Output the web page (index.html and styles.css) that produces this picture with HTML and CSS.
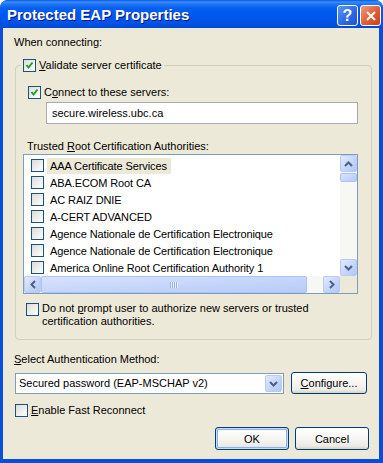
FILE: index.html
```html
<!DOCTYPE html>
<html lang="en">
<head>
    <meta charset="UTF-8">
    <meta name="viewport" content="width=device-width, initial-scale=1.0">
    <title>Protected EAP Properties</title>
    <link rel="stylesheet" href="styles.css">
</head>
<body>
    <div class="window">
        <div class="titlebar">
            <span class="title">Protected EAP Properties</span>
            <div class="caption-buttons">
                <span class="cap-btn help">?</span>
                <span class="cap-btn close">
                    <svg width="10" height="10" viewBox="0 0 10 10"><path d="M1 1 L9 9 M9 1 L1 9" stroke="#fff" stroke-width="2" fill="none"/></svg>
                </span>
            </div>
        </div>

        <div class="client">
            <div class="label first">When connecting:</div>

            <fieldset class="group">
                <legend class="check-label legend">
                    <span class="box"><svg width="11" height="11" viewBox="0 0 11 11"><path d="M2.5 5 L4.5 7.5 L8.5 2.5" stroke="#21A121" stroke-width="2" fill="none"/></svg></span>
                    <span><u>V</u>alidate server certificate</span>
                </legend>

                <div class="check-label connect">
                    <span class="box"><svg width="11" height="11" viewBox="0 0 11 11"><path d="M2.5 5 L4.5 7.5 L8.5 2.5" stroke="#21A121" stroke-width="2" fill="none"/></svg></span>
                    <span>C<u>o</u>nnect to these servers:</span>
                </div>
                <div class="textbox">secure.wireless.ubc.ca</div>

                <div class="label trusted">Trusted <u>R</u>oot Certification Authorities:</div>
                <div class="listbox">
                    <div class="list-items">
                        <div class="item"><span class="box"></span><span class="item-text selected">AAA Certificate Services</span></div>
                        <div class="item"><span class="box"></span><span class="item-text">ABA.ECOM Root CA</span></div>
                        <div class="item"><span class="box"></span><span class="item-text">AC RAIZ DNIE</span></div>
                        <div class="item"><span class="box"></span><span class="item-text">A-CERT ADVANCED</span></div>
                        <div class="item"><span class="box"></span><span class="item-text">Agence Nationale de Certification Electronique</span></div>
                        <div class="item"><span class="box"></span><span class="item-text">Agence Nationale de Certification Electronique</span></div>
                        <div class="item"><span class="box"></span><span class="item-text">America Online Root Certification Authority 1</span></div>
                    </div>
                    <div class="vscroll">
                        <span class="sb-btn"><svg width="9" height="6" viewBox="0 0 9 6"><path d="M1 5 L4.5 1.5 L8 5" fill="none" stroke="#4D6185" stroke-width="2"/></svg></span>
                        <span class="sb-thumb vthumb"></span>
                        <span class="sb-track"></span>
                        <span class="sb-btn"><svg width="9" height="6" viewBox="0 0 9 6"><path d="M1 1 L4.5 4.5 L8 1" fill="none" stroke="#4D6185" stroke-width="2"/></svg></span>
                    </div>
                    <div class="hscroll">
                        <span class="sb-btn"><svg width="6" height="9" viewBox="0 0 6 9"><path d="M5 1 L1.5 4.5 L5 8" fill="none" stroke="#4D6185" stroke-width="2"/></svg></span>
                        <span class="sb-thumb hthumb"><span class="grip"></span></span>
                        <span class="sb-track"></span>
                        <span class="sb-btn"><svg width="6" height="9" viewBox="0 0 6 9"><path d="M1 1 L4.5 4.5 L1 8" fill="none" stroke="#4D6185" stroke-width="2"/></svg></span>
                    </div>
                    <div class="corner"></div>
                </div>

                <div class="check-label prompt">
                    <span class="box"></span>
                    <span>Do not <u>p</u>rompt user to authorize new servers or trusted<br>certification authorities.</span>
                </div>
            </fieldset>

            <div class="label method"><u>S</u>elect Authentication Method:</div>
            <div class="method-row">
                <div class="combo">
                    <span class="combo-text">Secured password (EAP-MSCHAP v2)</span>
                    <span class="sb-btn combo-btn"><svg width="9" height="6" viewBox="0 0 9 6"><path d="M1 1 L4.5 4.5 L8 1" fill="none" stroke="#4D6185" stroke-width="2"/></svg></span>
                </div>
                <button class="btn configure"><u>C</u>onfigure...</button>
            </div>

            <div class="check-label fast">
                <span class="box"></span>
                <span><u>E</u>nable Fast Reconnect</span>
            </div>

            <div class="dialog-buttons">
                <button class="btn default">OK</button>
                <button class="btn">Cancel</button>
            </div>
        </div>
    </div>
</body>
</html>
```

FILE: styles.css
```css
body {
    margin: 0;
    font-family: "Liberation Sans", Arial, sans-serif;
    font-size: 11px;
    line-height: 13px;
    color: #000;
}
.window {
    width: 383px;
    height: 463px;
    background: #0A4DDA;
    border-radius: 8px 8px 0 0;
    display: flex;
    flex-direction: column;
    overflow: hidden;
}
.titlebar {
    height: 28px;
    flex: none;
    display: flex;
    justify-content: space-between;
    background: linear-gradient(to bottom, #0757E5 0px, #3B8DF8 2px, #2176F5 4px, #0560EF 8px, #0058EE 14px, #0055E8 22px, #0149D7 28px);
}
.title {
    margin: 6px 0 0 7px;
    font-size: 15px;
    line-height: 17px;
    font-weight: bold;
    color: #fff;
    text-shadow: 1px 1px #0A1883;
}
.caption-buttons {
    display: flex;
    gap: 2px;
    margin: 5px 2px 0 0;
}
.cap-btn {
    width: 19px;
    height: 19px;
    border: 1px solid #fff;
    border-radius: 3px;
    display: flex;
    align-items: center;
    justify-content: center;
}
.help {
    background: linear-gradient(to bottom right, #5D97F7, #2A66E6 60%, #1D54D6);
    color: #fff;
    font-weight: bold;
    font-size: 16px;
}
.close {
    background: linear-gradient(to bottom right, #EE9D82, #E25B33 55%, #C8401B);
}
.client {
    flex: 1;
    margin: 0 4px 4px 3px;
    padding-top: 8px;
    background: #ECE9D8;
}
.label {
    margin-left: 11px;
}
.group {
    margin: 10px 0 0 12px;
    padding: 0 0 11px 0;
    width: 357px;
    box-sizing: border-box;
    border: 1px solid #D0D0BF;
    border-radius: 4px;
}
.check-label {
    display: flex;
    align-items: flex-start;
    gap: 3px;
    white-space: nowrap;
}
.legend {
    margin-left: 5px;
    padding: 0 2px;
}
.box {
    width: 13px;
    height: 13px;
    flex: none;
    box-sizing: border-box;
    border: 1px solid #1C5180;
    background: linear-gradient(135deg, #DCDCD7, #FFFFFF);
    display: flex;
}
.connect {
    margin: 14px 0 0 12px;
}
.textbox {
    margin: 3px 0 0 30px;
    width: 312px;
    height: 22px;
    box-sizing: border-box;
    border: 1px solid #A5ACB2;
    background: #fff;
    padding-left: 5px;
    line-height: 20px;
}
.trusted {
    margin-top: 16px;
}
.listbox {
    margin: 1px 0 0 7px;
    width: 335px;
    height: 140px;
    box-sizing: border-box;
    border: 1px solid #7F9DB9;
    background: #fff;
    display: grid;
    grid-template-columns: 1fr 17px;
    grid-template-rows: 1fr 17px;
}
.list-items {
    padding-top: 2px;
    overflow: hidden;
    white-space: nowrap;
    letter-spacing: -0.1px;
}
.item {
    height: 17px;
    padding-left: 7px;
    display: flex;
    align-items: center;
}
.item-text {
    margin-left: 3px;
    padding: 0 4px 0 3px;
    line-height: 16px;
}
.selected {
    background: #ECE9D8;
}
.vscroll, .hscroll {
    display: flex;
    background: #F7F7F3;
}
.vscroll {
    flex-direction: column;
}
.sb-btn {
    width: 17px;
    height: 17px;
    flex: none;
    box-sizing: border-box;
    border: 1px solid #B9CBF3;
    border-radius: 2px;
    background: linear-gradient(to bottom right, #E3EBFE, #C2D3FB 60%, #B3C7F5);
    display: flex;
    align-items: center;
    justify-content: center;
}
.sb-track {
    flex: 1;
}
.sb-thumb {
    box-sizing: border-box;
    border: 1px solid #AFC3F2;
    border-radius: 2px;
    background: linear-gradient(to bottom right, #D7E2FD, #C3D4FB 60%, #B9CBF8);
}
.vthumb {
    height: 9px;
    margin-top: 1px;
}
.hthumb {
    width: 266px;
    display: flex;
    align-items: center;
    justify-content: center;
}
.grip {
    width: 8px;
    height: 6px;
    background: repeating-linear-gradient(to right, #8DAEF3 0 1px, #EEF3FE 1px 2px);
}
.corner {
    background: #ECE9D8;
}
.prompt {
    margin: 8px 0 0 10px;
}
.prompt .box {
    margin-top: 1px;
}
.method {
    margin-top: 13px;
}
.method-row {
    margin: 6px 0 0 12px;
    display: flex;
    align-items: flex-start;
}
.combo {
    margin-top: 1px;
    width: 269px;
    height: 21px;
    box-sizing: border-box;
    border: 1px solid #7F9DB9;
    background: #fff;
    display: flex;
    align-items: center;
    justify-content: space-between;
    padding: 0 1px 0 3px;
}
.btn {
    font-family: "Liberation Sans", Arial, sans-serif;
    font-size: 11px;
    color: #000;
    height: 23px;
    box-sizing: border-box;
    border: 1px solid #003C74;
    border-radius: 3px;
    background: linear-gradient(to bottom, #FFFFFF, #F5F4F0 55%, #ECEBE6 85%, #D6D0C5);
    padding: 0;
}
.configure {
    width: 76px;
    height: 22px;
    margin-left: 7px;
}
.fast {
    margin: 10px 0 0 12px;
}
.dialog-buttons {
    margin-top: 10px;
    padding-right: 10px;
    display: flex;
    justify-content: flex-end;
    gap: 6px;
}
.dialog-buttons .btn {
    width: 74px;
}
.default {
    box-shadow: inset 0 0 0 1px #C6DCFA, inset 0 0 0 2px #8FB1EA;
}
```
